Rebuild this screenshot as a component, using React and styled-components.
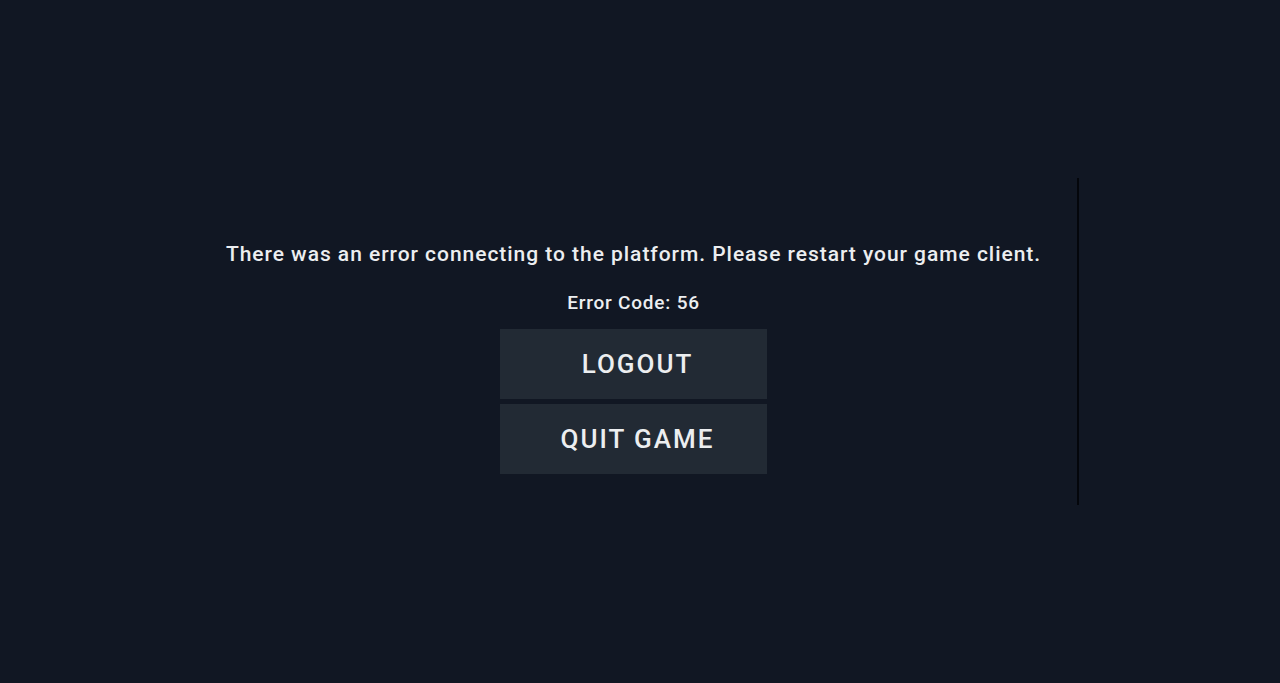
import React from 'react';
import styled, { createGlobalStyle } from 'styled-components';

const GlobalStyle = createGlobalStyle`
    html, body {
        margin: 0;
        padding: 0;
        background: #111723;
    }
    body {
        font-family: Roboto, "Liberation Sans", sans-serif;
        color: #eceef0;
    }
`;

const App = () => {
    return (<Screen>
        <GlobalStyle />
        <Stage>
            <ErrorPanel>
                <Message>There was an error connecting to the platform. Please restart your game client.</Message>
                <Code>Error Code: 56</Code>
                <Actions>
                    <ActionButton>LOGOUT</ActionButton>
                    <ActionButton>QUIT GAME</ActionButton>
                </Actions>
            </ErrorPanel>
            <Divider />
        </Stage>
    </Screen>);
};

export default App;

const Screen = styled.div`
    width: 1280px;
    height: 683px;
    background: #111723;
    padding: 178px 0 0 190px;
    box-sizing: border-box;
`;

const Stage = styled.div`
    display: flex;
    height: 327px;
`;

const ErrorPanel = styled.div`
    width: 887px;
    display: flex;
    flex-direction: column;
    align-items: center;
    padding-top: 64px;
    box-sizing: border-box;
`;

const Message = styled.p`
    margin: 0;
    font-size: 21px;
    line-height: 24px;
    font-weight: 500;
    letter-spacing: 0.96px;
    white-space: nowrap;
`;

const Code = styled.p`
    margin: 26px 0 0;
    font-size: 19px;
    line-height: 22px;
    font-weight: 500;
    letter-spacing: 0.8px;
`;

const Actions = styled.div`
    display: flex;
    flex-direction: column;
    gap: 5px;
    margin-top: 15px;
    margin-left: -1px;
`;

const ActionButton = styled.button`
    width: 267px;
    height: 70px;
    padding: 0 0 0 9px;
    border: none;
    background: #222a34;
    color: #eceef0;
    font-family: Roboto, "Liberation Sans", sans-serif;
    font-size: 26px;
    font-weight: 500;
    letter-spacing: 2px;
    cursor: pointer;
`;

const Divider = styled.div`
    width: 2px;
    height: 100%;
    background: #04060b;
`;
